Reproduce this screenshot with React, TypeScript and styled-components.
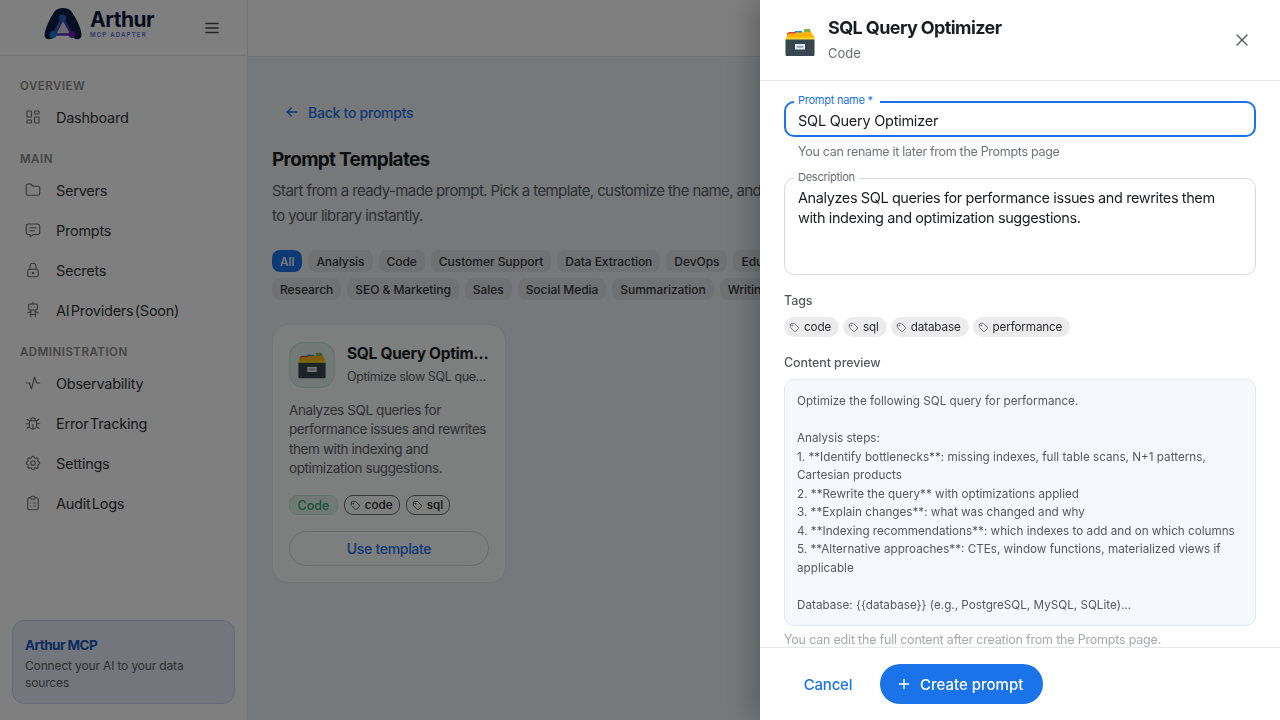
import React from "react";
import styled, { createGlobalStyle } from "styled-components";
import {
  TbLayoutDashboard, TbFolder, TbMessage, TbLock, TbRobot, TbActivity, TbBug,
  TbSettings, TbClipboardList, TbMenu2, TbArrowLeft, TbTag, TbX, TbPlus,
} from "react-icons/tb";

const FONT = `Inter, "Open Sans", "Liberation Sans", sans-serif`;

const Global = createGlobalStyle`
  * { box-sizing: border-box; }
  html, body { margin: 0; height: 100%; background: #fff; }
  body { font-family: ${FONT}; color: #1b1d20; overflow: hidden; }
  #root { height: 100%; }
`;

const Page = styled.div`display: flex; width: 1280px; height: 720px; overflow: hidden; background: #ecf0f4;`;
const Sidebar = styled.aside`width: 248px; flex: none; display: flex; flex-direction: column; background: #fff; border-right: 1px solid #e3e5e8;`;
const Brand = styled.div`height: 56px; flex: none; display: flex; align-items: center; padding: 0 26px 0 44px; justify-content: space-between; border-bottom: 1px solid #e3e5e8; color: #444;`;
const LogoWrap = styled.div`display: flex; align-items: flex-start; gap: 8px; height: 56px; padding-top: 8px;`;
const LogoWords = styled.div`display: flex; flex-direction: column; margin-top: 1px;`;
const LogoName = styled.span`font-size: 21px; line-height: 21px; font-weight: 700; color: #101a3c; letter-spacing: -0.5px;`;
const LogoSub = styled.span`font-size: 6px; line-height: 7px; font-weight: 600; letter-spacing: 1.2px; color: #5a6bd0; margin-top: 1px; white-space: nowrap;`;
const Nav = styled.nav`flex: 1; display: flex; flex-direction: column; padding: 22px 0 0 20px;`;
const SectionLabel = styled.div`height: 16px; line-height: 16px; font-size: 11.5px; font-weight: 600; letter-spacing: 0.5px; color: #8a8a8a; margin-bottom: 3px; & ~ & { margin-top: 14px; }`;
const NavItem = styled.div`height: 40px; display: flex; align-items: center; gap: 14px; padding-left: 4px; font-size: 14.5px; color: #33363b; letter-spacing: -0.25px; word-spacing: -2.5px; svg { width: 18px; height: 18px; color: #6b6e73; stroke-width: 1.5; flex: none; }`;
const PromoCard = styled.div`margin: 0 12px 16px; height: 84px; padding: 14px 12px; border: 1px solid #c9d5ee; border-radius: 12px; background: #e7edf8;`;
const PromoTitle = styled.div`font-size: 13.5px; line-height: 20px; font-weight: 700; color: #1559b8; letter-spacing: -0.55px;`;
const PromoText = styled.div`font-size: 12px; line-height: 17px; letter-spacing: -0.15px; color: #5a5e64; margin-top: 2px;`;

const Content = styled.div`flex: 1; min-width: 0; display: flex; flex-direction: column;`;
const TopBar = styled.div`height: 57px; flex: none; background: #fff; border-bottom: 1px solid #e3e5e8;`;
const Main = styled.main`flex: 1; padding: 45px 24px 0; overflow: hidden;`;
const BackLink = styled.div`display: flex; align-items: center; gap: 8px; height: 20px; padding-left: 12px; font-size: 14px; font-weight: 500; letter-spacing: -0.25px; color: #1a73e8; svg { width: 16px; height: 16px; }`;
const PageTitle = styled.h1`margin: 24px 0 0; font-size: 19px; line-height: 28px; font-weight: 700; letter-spacing: -0.7px; color: #1b1d20;`;
const PageDesc = styled.p`margin: 4px 0 0; width: 535px; font-size: 15px; line-height: 25px; letter-spacing: -0.6px; color: #5d6167;`;
const ChipList = styled.div`display: flex; flex-direction: column; gap: 6px; margin-top: 22px;`;
const ChipRow = styled.div`display: flex; gap: 6px; white-space: nowrap;`;
const Chip = styled.span<{ $active?: boolean }>`height: 22px; padding: 0 8px; display: inline-flex; align-items: center; border-radius: 8px; font-size: 12px; font-weight: 500; letter-spacing: -0.05px; background: ${p => (p.$active ? "#1a73e8" : "#e0e2e4")}; color: ${p => (p.$active ? "#fff" : "#33363b")};`;
const Card = styled.article`margin-top: 24px; width: 234px; height: 259px; padding: 17px 16px; background: #fbfcfd; border: 1px solid #e6e8eb; border-radius: 16px;`;
const CardHead = styled.div`display: flex; gap: 12px;`;
const IconBox = styled.div`width: 46px; height: 46px; flex: none; display: flex; align-items: center; justify-content: center; border-radius: 14px; background: #e3f3ee; border: 1px solid #c6e6da;`;
const CardHeadText = styled.div`flex: 1; min-width: 0;`;
const CardTitle = styled.div`font-size: 15.5px; line-height: 22px; font-weight: 700; white-space: nowrap; overflow: hidden; text-overflow: ellipsis; letter-spacing: -0.3px; margin-top: 1px;`;
const CardSub = styled.div`font-size: 12.5px; line-height: 18px; letter-spacing: -0.4px; margin-top: 3px; color: #5d6167; white-space: nowrap; overflow: hidden; text-overflow: ellipsis;`;
const CardText = styled.p`margin: 13px 0 0; font-size: 13.5px; line-height: 19.3px; letter-spacing: -0.4px; color: #5d6167; white-space: pre;`;
const CardTags = styled.div`display: flex; gap: 6px; margin-top: 17px;`;
const CodeBadge = styled.span`height: 20px; padding: 0 7.5px; display: inline-flex; align-items: center; border-radius: 8px; font-size: 12.5px; font-weight: 500; color: #2ba471; background: #e3f3ee; border: 1px solid #c6e6da;`;
const OutlineTag = styled.span`height: 20px; padding: 0 6px 0 5px; display: inline-flex; align-items: center; gap: 4px; border-radius: 9px; font-size: 11.7px; font-weight: 500; color: #1b1d20; border: 1px solid #6b6e73; svg { width: 11px; height: 11px; color: #55585c; }`;
const UseButton = styled.div`margin-top: 16px; height: 35px; border: 1px solid #d5d8dc; border-radius: 18px; display: flex; align-items: center; justify-content: center; font-size: 14px; font-weight: 500; letter-spacing: -0.3px; color: #1a73e8;`;

const Backdrop = styled.div`position: fixed; inset: 0; background: rgba(0, 0, 0, 0.5); backdrop-filter: blur(0.6px);`;
const Drawer = styled.section`position: fixed; top: 0; right: 0; bottom: 0; width: 520px; display: flex; flex-direction: column; background: #fff; box-shadow: -8px 0 24px rgba(0, 0, 0, 0.22);`;
const DrawerHead = styled.header`height: 81px; flex: none; display: flex; align-items: flex-start; padding: 16px 28px 0 24px; border-bottom: 1px solid #e5e7eb;`;
const HeadEmoji = styled.div`width: 32px; margin-top: 10px; flex: none;`;
const HeadText = styled.div`flex: 1; margin-left: 12px;`;
const DrawerTitle = styled.h2`margin: 0; font-size: 18px; line-height: 24px; font-weight: 700; letter-spacing: -0.6px; color: #1b1d20;`;
const DrawerSub = styled.div`margin-top: 4px; font-size: 13px; line-height: 18px; color: #6a6d72;`;
const CloseBtn = styled.div`margin-top: 14px; color: #55585c; display: flex; svg { width: 20px; height: 20px; stroke-width: 1.6; }`;
const DrawerBody = styled.div`flex: 1; min-height: 0; overflow: hidden; padding: 20px 24px 0;`;
const Field = styled.div`position: relative;`;
const FloatLabel = styled.label<{ $focus?: boolean }>`position: absolute; top: -8px; left: 10px; padding: 0 4px; background: #fff; font-size: 11px; line-height: 14px; letter-spacing: -0.25px; color: ${p => (p.$focus ? "#1a73e8" : "#6a6d72")}; ${p => p.$focus && "padding-right: 7px;"}`;
const NameInput = styled.input`display: block; width: 100%; height: 36px; padding: 2px 12px 0; border: 2px solid #1a73e8; border-radius: 10px; outline: none; font: 400 14.5px ${FONT}; letter-spacing: -0.25px; color: #1b1d20; background: #fff;`;
const Helper = styled.div`margin: 6px 0 0 14px; font-size: 12.5px; line-height: 18px; letter-spacing: -0.3px; color: #6f7277;`;
const DescArea = styled.textarea`display: block; width: 100%; height: 97px; margin-top: 17px; padding: 9px 13px; resize: none; border: 1px solid #d9dbdf; border-radius: 10px; outline: none; font: 400 14.5px/20px ${FONT}; letter-spacing: -0.4px; color: #1b1d20; background: #fff; white-space: pre; overflow: hidden;`;
const SmallHeading = styled.div`font-size: 12.5px; line-height: 18px; font-weight: 500; letter-spacing: -0.1px; color: #55585c; margin-top: 17px;`;
const TagRow = styled.div`display: flex; gap: 4px; margin-top: 7px;`;
const GreyTag = styled.span`height: 20px; padding: 0 8px 0 5px; display: inline-flex; align-items: center; gap: 4px; border-radius: 10px; background: #ececec; font-size: 11.7px; letter-spacing: -0.15px; color: #2a2c30; svg { width: 11px; height: 11px; color: #6f7277; }`;
const Preview = styled.pre`margin: 7px 0 0; height: 247px; padding: 12px 12px 0; overflow: hidden; background: #f5f8fd; border: 1px solid #e4e8f0; border-radius: 10px; font: 400 11.7px/18.5px ${FONT}; color: #55585c;`;
const FadedHelper = styled.div`margin-top: 5px; font-size: 12.5px; line-height: 18px; letter-spacing: -0.2px; color: #a6a8ac;`;
const DrawerFoot = styled.footer`height: 73px; flex: none; display: flex; align-items: center; gap: 16px; padding: 0 32px; border-top: 1px solid #e5e7eb;`;
const CancelBtn = styled.div`width: 72px; text-align: center; font-size: 15px; font-weight: 500; letter-spacing: -0.2px; color: #1a73e8;`;
const CreateBtn = styled.div`height: 40px; width: 163px; padding-left: 16px; display: flex; align-items: center; gap: 8px; border-radius: 20px; background: #1a73e8; color: #fff; font-size: 15px; font-weight: 500; svg { width: 16px; height: 16px; stroke-width: 2; }`;

const Logo = () => (
  <svg width="38" height="32" viewBox="0 0 38 32" aria-hidden="true">
    <defs>
      <linearGradient id="tri" x1="0" y1="0" x2="1" y2="1">
        <stop offset="0" stopColor="#1f6fd0" />
        <stop offset="1" stopColor="#6a1fb0" />
      </linearGradient>
    </defs>
    <path
      fillRule="evenodd"
      d="M0.500 27C1 20 7 8 11 3c3-4 13-4 16 0 4 5 10.500 17 10.500 24 0 4-4 5-7 3.500l-3-3 -8-15-8 15-3 3C4.500 32 0.500 31 0.500 27Z"
      fill="#0f1c44"
    />
    <path d="M18.500 10 L28 26.500 L9 26.500 Z" fill="#9aa3c4" fillOpacity="0.45" stroke="url(#tri)" strokeWidth="2.400" />
    <circle cx="18.500" cy="10" r="3.600" fill="#2460c8" />
    <circle cx="9" cy="26.500" r="3.600" fill="#1a7ac8" />
    <circle cx="28" cy="26.500" r="3.600" fill="#6a1fb0" />
  </svg>
);

const FileBox = ({ size }: { size: number }) => (
  <svg width={size} height={size} viewBox="0 0 32 32" aria-hidden="true">
    <path d="M3 7.500 5 6h7v4H3z" fill="#e53935" />
    <path d="M11 5h7l1 3h-8z" fill="#1e88e5" />
    <path d="M20 3h6l1.500 5H20z" fill="#7cb342" />
    <path d="M3 9 5 7.500h6l1 -1h7l1 -.5h7l1 2 2 2v4H2z" fill="#ffb300" />
    <path d="M1.500 11.500h29v3h-29z" fill="#fdd835" />
    <path d="M1.500 13.500h29V29a1 1 0 0 1-1 1h-27a1 1 0 0 1-1-1z" fill="#37474f" />
    <path d="M11 18h10v5.500H11z" fill="#eceff1" />
    <path d="M12.800 19.700h6.400v2h-6.400z" fill="#90a4ae" />
  </svg>
);

const nav = {
  overview: [[TbLayoutDashboard, "Dashboard"]],
  main: [[TbFolder, "Servers"], [TbMessage, "Prompts"], [TbLock, "Secrets"], [TbRobot, "AI Providers (Soon)"]],
  admin: [[TbActivity, "Observability"], [TbBug, "Error Tracking"], [TbSettings, "Settings"], [TbClipboardList, "Audit Logs"]],
} as const;

const row1 = ["Analysis", "Code", "Customer Support", "Data Extraction", "DevOps", "Education"];
const row2 = ["Research", "SEO & Marketing", "Sales", "Social Media", "Summarization", "Writing"];

const previewText = `Optimize the following SQL query for performance.

Analysis steps:
1. **Identify bottlenecks**: missing indexes, full table scans, N+1 patterns,
Cartesian products
2. **Rewrite the query** with optimizations applied
3. **Explain changes**: what was changed and why
4. **Indexing recommendations**: which indexes to add and on which columns
5. **Alternative approaches**: CTEs, window functions, materialized views if
applicable

Database: {{database}} (e.g., PostgreSQL, MySQL, SQLite)...`;

const NavList = ({ items }: { items: readonly (readonly [React.ComponentType, string])[] }) => (
  <>
    {items.map(([Icon, label]) => (
      <NavItem key={label}><Icon />{label}</NavItem>
    ))}
  </>
);

export default function App() {
  return (
    <>
      <Global />
      <Page>
        <Sidebar>
          <Brand>
            <LogoWrap>
              <Logo />
              <LogoWords>
                <LogoName>Arthur</LogoName>
                <LogoSub>MCP ADAPTER</LogoSub>
              </LogoWords>
            </LogoWrap>
            <TbMenu2 size={18} />
          </Brand>
          <Nav>
            <SectionLabel>OVERVIEW</SectionLabel>
            <NavList items={nav.overview} />
            <SectionLabel>MAIN</SectionLabel>
            <NavList items={nav.main} />
            <SectionLabel>ADMINISTRATION</SectionLabel>
            <NavList items={nav.admin} />
          </Nav>
          <PromoCard>
            <PromoTitle>Arthur MCP</PromoTitle>
            <PromoText>Connect your AI to your data sources</PromoText>
          </PromoCard>
        </Sidebar>
        <Content>
          <TopBar />
          <Main>
            <BackLink><TbArrowLeft />Back to prompts</BackLink>
            <PageTitle>Prompt Templates</PageTitle>
            <PageDesc>Start from a ready-made prompt. Pick a template, customize the name, and add it to your library instantly.</PageDesc>
            <ChipList>
              <ChipRow>
                <Chip $active>All</Chip>
                {row1.map(c => <Chip key={c}>{c}</Chip>)}
              </ChipRow>
              <ChipRow>
                {row2.map(c => <Chip key={c}>{c}</Chip>)}
              </ChipRow>
            </ChipList>
            <Card>
              <CardHead>
                <IconBox><FileBox size={30} /></IconBox>
                <CardHeadText>
                  <CardTitle>SQL Query Optimizer</CardTitle>
                  <CardSub>Optimize slow SQL queries</CardSub>
                </CardHeadText>
              </CardHead>
              <CardText>{"Analyzes SQL queries for\nperformance issues and rewrites\nthem with indexing and\noptimization suggestions."}</CardText>
              <CardTags>
                <CodeBadge>Code</CodeBadge>
                <OutlineTag><TbTag />code</OutlineTag>
                <OutlineTag><TbTag />sql</OutlineTag>
              </CardTags>
              <UseButton>Use template</UseButton>
            </Card>
          </Main>
        </Content>
      </Page>
      <Backdrop />
      <Drawer>
        <DrawerHead>
          <HeadEmoji><FileBox size={32} /></HeadEmoji>
          <HeadText>
            <DrawerTitle>SQL Query Optimizer</DrawerTitle>
            <DrawerSub>Code</DrawerSub>
          </HeadText>
          <CloseBtn><TbX /></CloseBtn>
        </DrawerHead>
        <DrawerBody>
          <Field>
            <FloatLabel $focus>Prompt name *</FloatLabel>
            <NameInput readOnly value="SQL Query Optimizer" />
          </Field>
          <Helper>You can rename it later from the Prompts page</Helper>
          <Field>
            <DescArea readOnly value={"Analyzes SQL queries for performance issues and rewrites them\nwith indexing and optimization suggestions."} />
            <FloatLabel>Description</FloatLabel>
          </Field>
          <SmallHeading>Tags</SmallHeading>
          <TagRow>
            {["code", "sql", "database", "performance"].map(t => (
              <GreyTag key={t}><TbTag />{t}</GreyTag>
            ))}
          </TagRow>
          <SmallHeading>Content preview</SmallHeading>
          <Preview>{previewText}</Preview>
          <FadedHelper>You can edit the full content after creation from the Prompts page.</FadedHelper>
        </DrawerBody>
        <DrawerFoot>
          <CancelBtn>Cancel</CancelBtn>
          <CreateBtn><TbPlus />Create prompt</CreateBtn>
        </DrawerFoot>
      </Drawer>
    </>
  );
}
